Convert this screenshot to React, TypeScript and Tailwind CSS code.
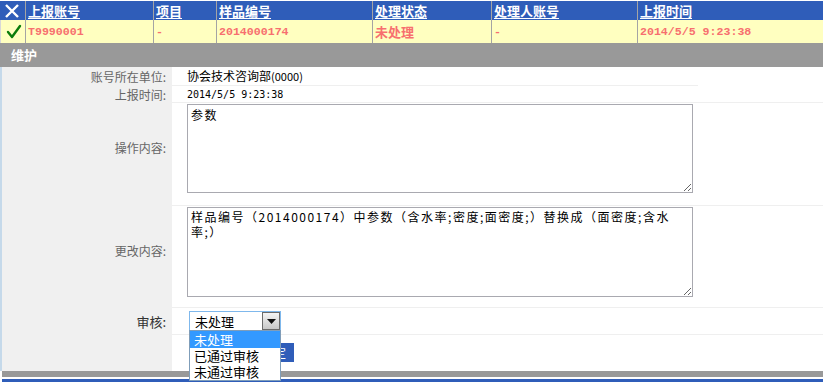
import React from "react";

const cjk = { fontFamily: '"Noto Sans CJK SC", "Noto Sans", sans-serif' };
const mono = { fontFamily: '"Liberation Mono", "Noto Sans CJK SC", monospace' };

function HeaderCell({ w, children, first }: { w: string; children?: React.ReactNode; first?: boolean }) {
  return (
    <div className={`${w} h-full flex items-center ${first ? "" : "border-l border-[#a4a4a4] pl-[2px]"}`}>
      {children}
    </div>
  );
}

export default function App() {
  const widths = ["w-[25px]", "w-[128px]", "w-[63px]", "w-[156px]", "w-[119px]", "w-[146px]", "flex-1"];
  return (
    <div className="w-[823px] h-[390px] bg-white overflow-hidden relative" style={cjk}>
      <div className="h-[1px] bg-white" />
      {/* header */}
      <div className="flex h-[19px] bg-[#2f5db9] text-white text-[13px] font-bold leading-none">
        <HeaderCell w={widths[0]} first>
          <svg width="25" height="19" viewBox="0 0 25 19">
            <path d="M6 4 L18 16 M18 4 L6 16" stroke="white" strokeWidth="2.4" />
          </svg>
        </HeaderCell>
        <HeaderCell w={widths[1]}><span className="underline underline-offset-2">上报账号</span></HeaderCell>
        <HeaderCell w={widths[2]}><span className="underline underline-offset-2">项目</span></HeaderCell>
        <HeaderCell w={widths[3]}><span className="underline underline-offset-2">样品编号</span></HeaderCell>
        <HeaderCell w={widths[4]}><span className="underline underline-offset-2">处理状态</span></HeaderCell>
        <HeaderCell w={widths[5]}><span className="underline underline-offset-2">处理人账号</span></HeaderCell>
        <HeaderCell w={widths[6]}><span className="underline underline-offset-2">上报时间</span></HeaderCell>
      </div>
      {/* data row */}
      <div className="flex h-[23px] bg-[#ffffc0] text-[#f76f6f] font-bold leading-none border-l border-[#d8d8d8]">
        <HeaderCell w="w-[24px]" first>
          <svg width="24" height="23" viewBox="0 0 24 23">
            <path d="M7 12 L11 17 L19 6" stroke="#0b7d0b" strokeWidth="2.4" fill="none" strokeLinecap="round" strokeLinejoin="round" />
          </svg>
        </HeaderCell>
        <HeaderCell w={widths[1]}><span className="text-[11.6px]" style={mono}>T9990001</span></HeaderCell>
        <HeaderCell w={widths[2]}><span className="text-[11.6px]" style={mono}>-</span></HeaderCell>
        <HeaderCell w={widths[3]}><span className="text-[11.6px]" style={mono}>2014000174</span></HeaderCell>
        <HeaderCell w={widths[4]}><span className="text-[13px]">未处理</span></HeaderCell>
        <HeaderCell w={widths[5]}><span className="text-[11.6px]" style={mono}>-</span></HeaderCell>
        <HeaderCell w={widths[6]}><span className="text-[11.6px]" style={mono}>2014/5/5 9:23:38</span></HeaderCell>
      </div>
      {/* title bar */}
      <div className="h-[24px] bg-[#999999] flex items-center pl-[11px] text-white text-[13px] font-bold">维护</div>

      {/* form */}
      <div className="border-l-2 border-[#c5d9ea] text-[12px]">
        {/* row1 */}
        <div className="flex h-[19px]">
          <div className="w-[170px] bg-[#f0f0f0] flex items-center justify-end pr-[6px] text-[#666]">账号所在单位:</div>
          <div className="flex-1">
            <div className="w-[526px] h-full border-b border-[#efefef] flex items-center pl-[15px] text-black">
              协会技术咨询部<span className="text-[11px]">(0000)</span>
            </div>
          </div>
        </div>
        {/* row2 */}
        <div className="flex h-[17px]">
          <div className="w-[170px] bg-[#f0f0f0] flex items-center justify-end pr-[6px] text-[#666]">上报时间:</div>
          <div className="flex-1 border-b border-[#efefef] flex items-center pl-[15px] text-black text-[10px]" style={{ fontFamily: '"DejaVu Sans Mono", "Liberation Mono", monospace' }}>
            2014/5/5 9:23:38
          </div>
        </div>
        {/* row3 */}
        <div className="flex h-[103px]">
          <div className="w-[170px] bg-[#f0f0f0] flex items-center justify-end pr-[6px] pb-[13px] text-[#666]">操作内容:</div>
          <div className="flex-1 border-b border-[#efefef] pl-[15px] pt-[1px]">
            <textarea
              readOnly
              value="参数"
              className="block w-[506px] h-[89px] border border-[#a9a9b0] bg-white px-[3px] py-[2px] text-[12px] tracking-[1.5px] text-black leading-[15px] outline-none"
              style={cjk}
            />
          </div>
        </div>
        {/* row4 */}
        <div className="flex h-[102px]">
          <div className="w-[170px] bg-[#f0f0f0] flex items-center justify-end pr-[6px] pb-[12px] text-[#666]">更改内容:</div>
          <div className="flex-1 border-b border-[#efefef] pl-[15px] pt-[1px]">
            <textarea
              readOnly
              value={"样品编号（2014000174）中参数（含水率;密度;面密度;）替换成（面密度;含水\n率;）"}
              className="block w-[506px] h-[90px] border border-[#a9a9b0] bg-white px-[3px] py-[1px] text-[12px] tracking-[1.5px] text-black leading-[15px] outline-none resize-y whitespace-pre overflow-hidden"
              style={cjk}
            />
          </div>
        </div>
        {/* row5 */}
        <div className="flex h-[27px]">
          <div className="w-[170px] bg-[#f0f0f0] flex items-center justify-end pr-[6px] text-[#333] text-[13px]">审核:</div>
          <div className="flex-1 border-b border-[#efefef] pl-[17px] pt-[3px] relative">
            <div className="w-[92px] h-[20px] border border-[#7fb8ec] flex items-stretch bg-white">
              <div className="flex-1 flex items-center pl-[5px] text-[13px] text-black leading-none">未处理</div>
              <div className="w-[18px] border border-[#6b6b6b] bg-gradient-to-b from-[#f4f4f4] to-[#c8c8c8] flex items-center justify-center">
                <svg width="9" height="5" viewBox="0 0 9 5"><path d="M0 0 H9 L4.5 5 Z" fill="#111" /></svg>
              </div>
            </div>
          </div>
        </div>
        {/* row6 */}
        <div className="flex h-[36px]">
          <div className="w-[170px] bg-[#f0f0f0]" />
          <div className="flex-1 pt-[8px] pl-[74px]">
            <div className="w-[48px] h-[19px] bg-[#2f5db9] text-white text-[12px] flex items-center justify-end pr-[8px]">确定</div>
          </div>
        </div>
      </div>
      <div className="h-[6px] bg-[#999999] ml-[2px]" />
      <div className="h-[2px]" />
      <div className="h-[3px] bg-[#2f5db9] ml-[2px]" />

      {/* open dropdown list */}
      <div className="absolute left-[189px] top-[330px] w-[92px] border border-[#7f9db9] bg-white text-[13px] leading-[16px] text-black z-10">
        <div className="bg-[#3399ff] text-white pl-[4px] h-[17px] flex items-center">未处理</div>
        <div className="pl-[4px] h-[16px] flex items-center">已通过审核</div>
        <div className="pl-[4px] h-[16px] flex items-center">未通过审核</div>
      </div>
    </div>
  );
}
